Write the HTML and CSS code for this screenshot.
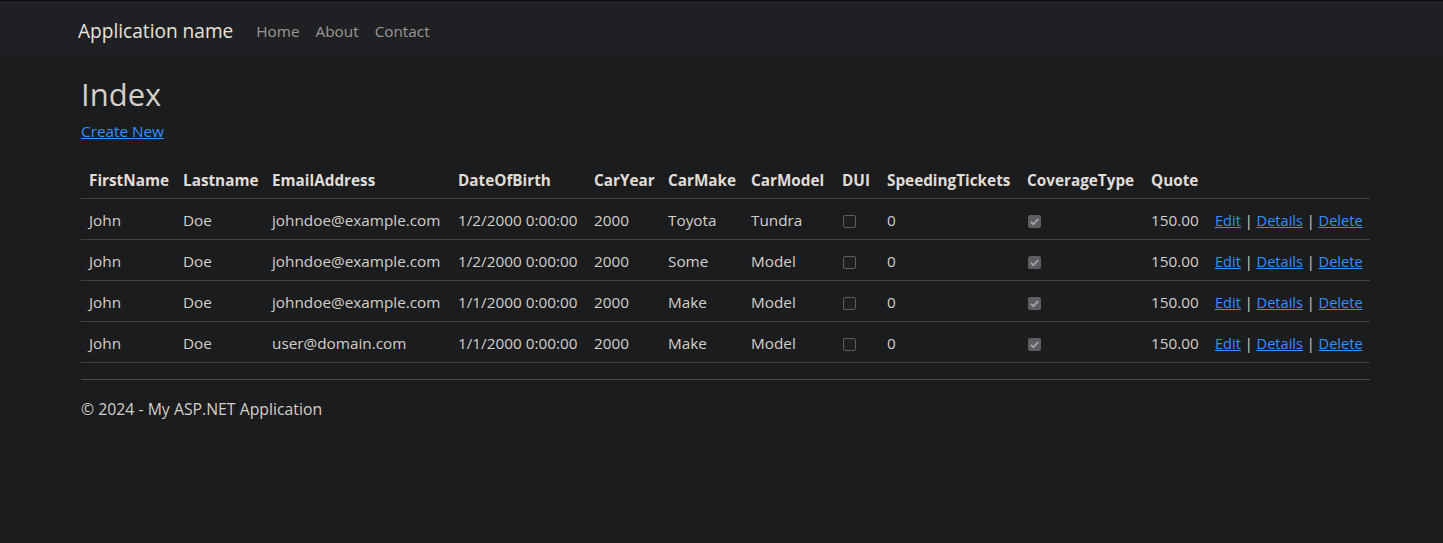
FILE: index.html
```html
<!DOCTYPE html>
<html lang="en">
<head>
<meta charset="utf-8">
<title>Index - My ASP.NET Application</title>
<link rel="stylesheet" href="styles.css">
</head>
<body>
<nav class="navbar">
  <div class="nav-inner">
    <a class="brand" href="#">Application name</a>
    <ul class="nav-links">
      <li><a href="#">Home</a></li>
      <li><a href="#">About</a></li>
      <li><a href="#">Contact</a></li>
    </ul>
  </div>
</nav>
<main class="body-content">
  <h2 class="title">Index</h2>
  <p class="create"><a href="#">Create New</a></p>
  <table class="table">
    <colgroup>
      <col class="c1"><col class="c2"><col class="c3"><col class="c4"><col class="c5"><col class="c6">
      <col class="c7"><col class="c8"><col class="c9"><col class="c10"><col class="c11"><col class="c12">
    </colgroup>
    <thead>
      <tr>
        <th>FirstName</th><th>Lastname</th><th>EmailAddress</th><th>DateOfBirth</th><th>CarYear</th><th>CarMake</th><th>CarModel</th><th>DUI</th><th>SpeedingTickets</th><th>CoverageType</th><th>Quote</th><th></th>
      </tr>
    </thead>
    <tbody>
      <tr>
        <td>John</td><td>Doe</td><td>johndoe@example.com</td><td>1/2/2000 0:00:00</td><td>2000</td><td>Toyota</td><td>Tundra</td>
        <td><span class="cb"></span></td><td>0</td>
        <td><span class="cb checked"><svg viewBox="0 0 13 13" width="13" height="13"><path d="M3 6.8 L5.4 9.2 L10.2 4.2" fill="none" stroke="#a3a4a6" stroke-width="1.8"/></svg></span></td>
        <td>150.00</td>
        <td class="actions"><a href="#">Edit</a> | <a href="#">Details</a> | <a href="#">Delete</a></td>
      </tr>
      <tr>
        <td>John</td><td>Doe</td><td>johndoe@example.com</td><td>1/2/2000 0:00:00</td><td>2000</td><td>Some</td><td>Model</td>
        <td><span class="cb"></span></td><td>0</td>
        <td><span class="cb checked"><svg viewBox="0 0 13 13" width="13" height="13"><path d="M3 6.8 L5.4 9.2 L10.2 4.2" fill="none" stroke="#a3a4a6" stroke-width="1.8"/></svg></span></td>
        <td>150.00</td>
        <td class="actions"><a href="#">Edit</a> | <a href="#">Details</a> | <a href="#">Delete</a></td>
      </tr>
      <tr>
        <td>John</td><td>Doe</td><td>johndoe@example.com</td><td>1/1/2000 0:00:00</td><td>2000</td><td>Make</td><td>Model</td>
        <td><span class="cb"></span></td><td>0</td>
        <td><span class="cb checked"><svg viewBox="0 0 13 13" width="13" height="13"><path d="M3 6.8 L5.4 9.2 L10.2 4.2" fill="none" stroke="#a3a4a6" stroke-width="1.8"/></svg></span></td>
        <td>150.00</td>
        <td class="actions"><a href="#">Edit</a> | <a href="#">Details</a> | <a href="#">Delete</a></td>
      </tr>
      <tr>
        <td>John</td><td>Doe</td><td>user@domain.com</td><td>1/1/2000 0:00:00</td><td>2000</td><td>Make</td><td>Model</td>
        <td><span class="cb"></span></td><td>0</td>
        <td><span class="cb checked"><svg viewBox="0 0 13 13" width="13" height="13"><path d="M3 6.8 L5.4 9.2 L10.2 4.2" fill="none" stroke="#a3a4a6" stroke-width="1.8"/></svg></span></td>
        <td>150.00</td>
        <td class="actions"><a href="#">Edit</a> | <a href="#">Details</a> | <a href="#">Delete</a></td>
      </tr>
    </tbody>
  </table>
  <hr class="rule">
  <footer class="footer">
    <p>&copy; 2024 - My ASP.NET Application</p>
  </footer>
</main>
</body>
</html>
```

FILE: styles.css
```css
* { box-sizing: border-box; }

html, body {
  margin: 0;
  padding: 0;
}

body {
  background: #1b1c1e;
  color: #d3cfc9;
  font-family: "Open Sans", "Noto Sans", sans-serif;
  font-size: 15.3px;
  line-height: 24px;
}

a { color: #3391ff; }

.navbar {
  height: 57px;
  border-top: 1px solid #0e0e0f;
  background: #1f2023;
}

.nav-inner {
  display: flex;
  align-items: center;
  height: 56px;
  padding-left: 78px;
  padding-top: 4px;
}

.brand {
  color: #e6e3df;
  text-decoration: none;
  font-size: 19.1px;
  margin-right: 23px;
}

.nav-links {
  display: flex;
  list-style: none;
  margin: 0;
  padding: 0;
  gap: 16px;
}

.nav-links a {
  color: #9b9995;
  text-decoration: none;
}

.body-content {
  width: 1289px;
  margin-left: 81px;
}

.title {
  margin: 18px 0 0;
  font-size: 31px;
  font-weight: 400;
  line-height: 38px;
  color: #d3cfc9;
}

.create {
  margin: 6px 0 19px;
}

.table {
  width: 100%;
  border-collapse: collapse;
  table-layout: fixed;
}

.c1 { width: 94px; }
.c2 { width: 89px; }
.c3 { width: 186px; }
.c4 { width: 136px; }
.c5 { width: 74px; }
.c6 { width: 83px; }
.c7 { width: 91px; }
.c8 { width: 45px; }
.c9 { width: 140px; }
.c10 { width: 124px; }
.c11 { width: 64px; }
.c12 { width: 163px; }

.table th,
.table td {
  padding: 9px 8px 7px;
  text-align: left;
  white-space: nowrap;
  border-bottom: 1px solid #3d3f42;
  vertical-align: middle;
}

.table th {
  font-weight: 700;
  color: #e0dcd6;
  padding-top: 6px;
  padding-bottom: 6px;
}

.cb {
  display: inline-block;
  width: 13px;
  height: 13px;
  margin-left: 1px;
  border: 1.5px solid #5b5d61;
  border-radius: 2px;
  background: #1e1f21;
  vertical-align: -2px;
}

.cb.checked {
  border: none;
  background: #5d5e62;
}

.cb svg { display: block; }

.actions {
  color: #d3cfc9;
  font-size: 14.6px;
}

.rule {
  border: 0;
  border-top: 1px solid #4a4c50;
  margin: 16px 0 0;
}

.footer p {
  margin: 17px 0 0;
  font-size: 15.8px;
}
```
